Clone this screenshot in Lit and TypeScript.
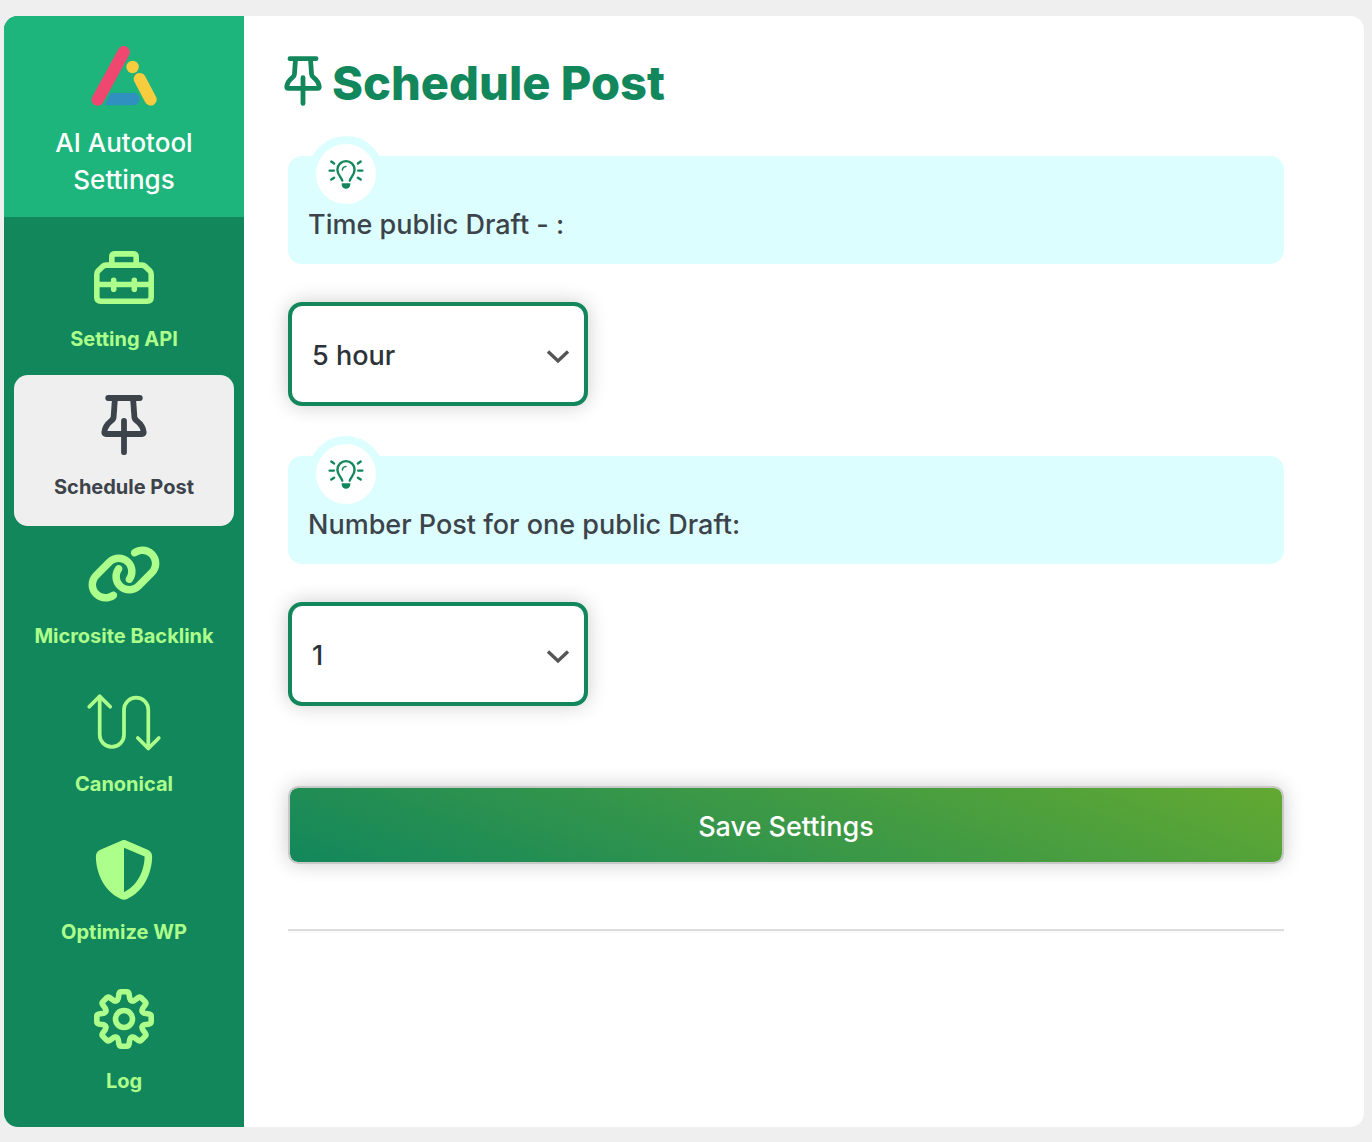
import { LitElement, html, css, svg, nothing } from "lit";
import type { SVGTemplateResult } from "lit";
import { customElement, property, state } from "lit/decorators.js";
import { classMap } from "lit/directives/class-map.js";

type IconName = "toolbox" | "pin" | "link" | "route" | "shield" | "gear";

const TOOTH =
  "M-7.6 -18.3 Q-6.2 -18.9 -5.8 -20.4 L-5 -25.2 Q-4.6 -27.2 -2.8 -27.2 H2.8 Q4.6 -27.2 5 -25.2 L5.8 -20.4 Q6.2 -18.9 7.6 -18.3";

/* Every glyph is drawn on the same 80 x 60 canvas. */
const ICONS: Record<IconName, SVGTemplateResult> = {
  toolbox: svg`
    <g fill="none" stroke="currentColor" stroke-width="5.6" stroke-linecap="round" stroke-linejoin="round">
      <path d="M27.8 17 V10 Q27.8 6.9 31 6.9 H49 Q52.2 6.9 52.2 10 V17" />
      <path d="M22 18.1 H58 Q60 18.1 61.3 19.4 L66 24.1 Q67.2 25.3 67.2 27.5 V50 Q67.2 54.2 63.2 54.2 H16.8 Q12.8 54.2 12.8 50 V27.5 Q12.8 25.3 14 24.1 L18.7 19.4 Q20 18.1 22 18.1 Z" />
      <path d="M13 37.5 H67 M29.7 33.2 V42.2 M50.3 33.2 V42.2" />
    </g>`,
  pin: svg`
    <g fill="none" stroke="currentColor" stroke-width="5.8" stroke-linecap="round" stroke-linejoin="round">
      <path d="M24.2 3 H55.8" />
      <path d="M30.9 4 L29.6 22 C29.5 24 28.6 24.8 27 26 C23.4 28.8 20.8 32.6 20.3 37.2 Q20.2 39 22 39 H58 Q59.8 39 59.7 37.2 C59.2 32.6 56.6 28.8 53 26 C51.4 24.8 50.5 24 50.4 22 L49.1 4" />
      <path d="M40 26 V57.2" />
    </g>`,
  link: svg`
    <path fill="currentColor" transform="translate(2.5 0) scale(.1171875)" d="M579.8 267.7c56.5-56.5 56.5-148 0-204.5c-50-50-128.8-56.5-186.3-15.4l-1.6 1.1c-14.4 10.3-17.7 30.3-7.4 44.6s30.3 17.7 44.6 7.4l1.6-1.1c32.1-22.9 76-19.3 103.8 8.6c31.5 31.5 31.5 82.5 0 114L422.3 334.8c-31.5 31.5-82.5 31.5-114 0c-27.9-27.9-31.5-71.8-8.6-103.8l1.1-1.6c10.3-14.4 6.9-34.4-7.4-44.6s-34.4-6.9-44.6 7.4l-1.1 1.6C206.5 251.2 213 330 263 380c56.5 56.5 148 56.5 204.5 0L579.8 267.7zM60.2 244.3c-56.5 56.5-56.5 148 0 204.5c50 50 128.8 56.5 186.3 15.4l1.6-1.1c14.4-10.3 17.7-30.3 7.4-44.6s-30.3-17.7-44.6-7.4l-1.6 1.1c-32.1 22.9-76 19.3-103.8-8.6C74 372 74 321 105.5 289.5L217.7 177.2c31.5-31.5 82.5-31.5 114 0c27.9 27.9 31.5 71.8 8.6 103.9l-1.1 1.6c-10.3 14.4-6.9 34.4 7.4 44.6s34.4 6.9 44.6-7.4l1.1-1.6C433.5 260.8 427 182 377 132c-56.5-56.5-148-56.5-204.5 0L60.2 244.3z" />`,
  route: svg`
    <g fill="none" stroke="currentColor" stroke-width="3.7" stroke-linecap="round" stroke-linejoin="round">
      <path d="M5.2 14.7 L15.7 4.2 L26.2 14.7" />
      <path d="M15.7 4.5 V42.8 A12.15 12.15 0 0 0 40 42.8 V17.8 A12.15 12.15 0 0 1 64.3 17.8 V56" />
      <path d="M53.8 46 L64.3 56.5 L74.8 46" />
    </g>`,
  shield: svg`
    <path fill="currentColor" transform="translate(10 0) scale(.1171875)" d="M256 0c4.6 0 9.2 1 13.4 2.9L457.7 82.8c22 9.3 38.4 31 38.3 57.2c-.5 99.2-41.3 280.7-213.6 363.2c-16.7 8-36.1 8-52.8 0C57.3 420.7 16.5 239.2 16 140c-.1-26.2 16.3-47.9 38.3-57.2L242.7 2.9C246.8 1 251.4 0 256 0zm0 66.8V444.8C394 378 431.1 230.1 432 141.4L256 66.8l0 0z" />`,
  gear: svg`
    <g transform="translate(40 30)" fill="none" stroke="currentColor" stroke-width="5.6" stroke-linecap="round" stroke-linejoin="round">
      ${[0, 45, 90, 135, 180, 225, 270, 315].map(
        (a) => svg`<path transform="rotate(${a})" d=${TOOTH} />`,
      )}
      <circle r="8.5" />
    </g>`,
};

const icon = (name: IconName) => html`
  <svg class="icon" viewBox="0 0 80 60" aria-hidden="true">${ICONS[name]}</svg>
`;

@customElement("hint-box")
class HintBox extends LitElement {
  static styles = css`
    :host {
      display: block;
    }
    .hint {
      position: relative;
      padding: 49px 20px 19px;
      border-radius: 14px;
      background: #dcfefe;
      color: #3c434a;
      font-size: 27px;
      line-height: 40px;
      font-weight: 500;
    }
    .badge {
      position: absolute;
      top: -20px;
      left: 20px;
      display: flex;
      align-items: center;
      justify-content: center;
      width: 60px;
      height: 60px;
      border: 8px solid #dcfefe;
      border-radius: 50%;
      background: #fff;
      color: #12875c;
    }
    .bulb {
      width: 36px;
      height: 30px;
    }
  `;

  render() {
    return html`
      <div class="hint">
        <span class="badge">
          <svg class="bulb" viewBox="0 0 36 30" aria-hidden="true">
            <g fill="none" stroke="currentColor" stroke-width="2.4" stroke-linecap="round" stroke-linejoin="round">
              <path d="M14.2 21.6 C13.6 18.4 9.4 15.8 9.4 10.7 A8.6 8.6 0 0 1 26.6 10.7 C26.6 15.8 22.4 18.4 21.8 21.6" />
              <path d="M14.4 11 C14.5 9 16 7.6 18 7.4" stroke-width="1.5" />
              <path d="M1.6 11.6 H5.8 M30.2 11.6 H34.4 M3.3 2.6 L6.1 4.5 M32.7 2.6 L29.9 4.5 M3.3 20.6 L6.1 18.7 M32.7 20.6 L29.9 18.7" />
            </g>
            <path fill="currentColor" d="M13.7 24.3 H22.3 V25.4 A4.3 4.3 0 0 1 13.7 25.4 Z" />
          </svg>
        </span>
        <slot></slot>
      </div>
    `;
  }
}

@customElement("choice-field")
class ChoiceField extends LitElement {
  @property() label = "";
  @property() value = "";
  @property({ attribute: false }) options: string[] = [];

  static styles = css`
    :host {
      display: block;
    }
    .label {
      display: block;
    }
    .box {
      position: relative;
      width: 300px;
      max-width: 100%;
      margin-top: 38px;
    }
    .select {
      display: block;
      width: 100%;
      height: 104px;
      padding: 2px 48px 0 20px;
      border: 4px solid #12875c;
      border-radius: 14px;
      appearance: none;
      background: #fff;
      box-shadow: 0 0 20px rgba(0, 0, 0, 0.2);
      color: #2c3338;
      font-family: inherit;
      font-size: 27px;
      font-weight: 500;
    }
    .chevron {
      position: absolute;
      top: 42px;
      right: 18px;
      width: 24px;
      height: 24px;
      pointer-events: none;
    }
  `;

  render() {
    return html`
      <label class="label" for="field"><hint-box>${this.label}</hint-box></label>
      <div class="box">
        <select class="select" id="field" aria-label=${this.label}>
          ${this.options.map(
            (o) => html`<option ?selected=${o === this.value}>${o}</option>`,
          )}
        </select>
        <svg class="chevron" viewBox="0 0 24 24" aria-hidden="true">
          <path d="M2 7.5 L12 17 L22 7.5" fill="none" stroke="#555" stroke-width="3.4" />
        </svg>
      </div>
    `;
  }
}

const TABS: { label: string; icon: IconName }[] = [
  { label: "Setting API", icon: "toolbox" },
  { label: "Schedule Post", icon: "pin" },
  { label: "Microsite Backlink", icon: "link" },
  { label: "Canonical", icon: "route" },
  { label: "Optimize WP", icon: "shield" },
  { label: "Log", icon: "gear" },
];

@customElement("app-root")
class AppRoot extends LitElement {
  @state() private active = "Schedule Post";

  static styles = css`
    :host {
      display: block;
      box-sizing: border-box;
      min-height: 100vh;
      padding: 16px 8px 15px 4px;
      background: #efefef;
      font-family: Inter, "Liberation Sans", sans-serif;
    }
    .panel {
      display: flex;
      min-height: calc(100vh - 31px);
      border-radius: 14px;
      background: #fff;
      overflow: hidden;
    }
    .side {
      display: flex;
      flex-direction: column;
      flex: 0 0 240px;
      background: #12875c;
    }
    .brand {
      display: flex;
      flex-direction: column;
      align-items: center;
      gap: 18px;
      padding: 30px 40px 19px;
      background: #1db57c;
      color: #fff;
      font-size: 26px;
      line-height: 37px;
      font-weight: 500;
      text-align: center;
    }
    .icon,
    .logo {
      display: block;
      width: 80px;
      height: 60px;
    }
    .nav {
      display: grid;
      flex: 1;
      grid-template-rows: repeat(6, minmax(148px, 1fr));
      padding: 10px;
    }
    .tab {
      display: flex;
      flex-direction: column;
      align-items: center;
      gap: 16px;
      height: 151px;
      margin-bottom: -3px;
      box-sizing: border-box;
      padding-top: 20px;
      border-radius: 14px;
      color: #adff8b;
      font-size: 20px;
      line-height: 32px;
      font-weight: 700;
      text-decoration: none;
      white-space: nowrap;
    }
    .tab.active {
      background: #efefef;
      color: #3c434a;
    }
    .main {
      flex: 1;
      min-width: 0;
      padding: 35px 80px 36px 44px;
    }
    .title {
      display: flex;
      align-items: flex-start;
      margin: 0;
      color: #12875c;
      font-size: 47px;
      line-height: 64px;
      font-weight: 800;
    }
    .title .icon {
      width: 66px;
      height: 50px;
      margin: 5px -4px 0 -18px;
    }
    .form {
      display: flex;
      flex-direction: column;
      gap: 50px;
      margin-top: 41px;
    }
    .save {
      height: 78px;
      margin-top: 30px;
      padding-top: 3px;
      border: 2px solid #c8c8c8;
      border-radius: 10px;
      background: linear-gradient(20deg, #12875c, #63a931) padding-box;
      box-shadow: 0 0 20px rgba(0, 0, 0, 0.2);
      color: #fff;
      font-family: inherit;
      font-size: 27px;
      font-weight: 500;
    }
    .rule {
      height: 0;
      margin: 65px 0 0;
      border: 0;
      border-top: 2px solid #dcdcde;
      border-bottom: 2px solid #f9f9f9;
    }
  `;

  render() {
    return html`
      <div class="panel">
        <aside class="side">
          <div class="brand">
            <svg class="logo" viewBox="0 0 80 60" aria-hidden="true">
              <g stroke-width="12.2" stroke-linecap="round">
                <path d="M39.7 6.2 L13.7 53.7" stroke="#ef476f" />
                <path d="M55.8 33 L66.6 53.5" stroke="#f7cc3e" />
              </g>
              <circle cx="48.6" cy="21" r="6.2" fill="#f7cc3e" />
              <path d="M27.4 47 H49.5 A6.1 6.1 0 0 1 49.5 59.2 H21.6 Q20.6 59.2 21.2 58 L26 48.4 Q26.7 47 27.4 47 Z" fill="#3090c0" />
            </svg>
            <span>AI Autotool Settings</span>
          </div>
          <nav class="nav">
            ${TABS.map(
              (t) => html`<a
                href="#"
                class=${classMap({ tab: true, active: t.label === this.active })}
                aria-current=${t.label === this.active ? "page" : nothing}
                @click=${(e: Event) => {
                  e.preventDefault();
                  this.active = t.label;
                }}
                >${icon(t.icon)}<span>${t.label}</span></a
              >`,
            )}
          </nav>
        </aside>
        <main class="main">
          <h1 class="title">${icon("pin")}<span>Schedule Post</span></h1>
          <form class="form" @submit=${(e: Event) => e.preventDefault()}>
            <choice-field
              label="Time public Draft - :"
              value="5 hour"
              .options=${["1 hour", "2 hour", "3 hour", "4 hour", "5 hour", "6 hour"]}
            ></choice-field>
            <choice-field
              label="Number Post for one public Draft:"
              value="1"
              .options=${["1", "2", "3", "4", "5"]}
            ></choice-field>
            <button class="save" type="submit">Save Settings</button>
          </form>
          <hr class="rule" />
        </main>
      </div>
    `;
  }
}
